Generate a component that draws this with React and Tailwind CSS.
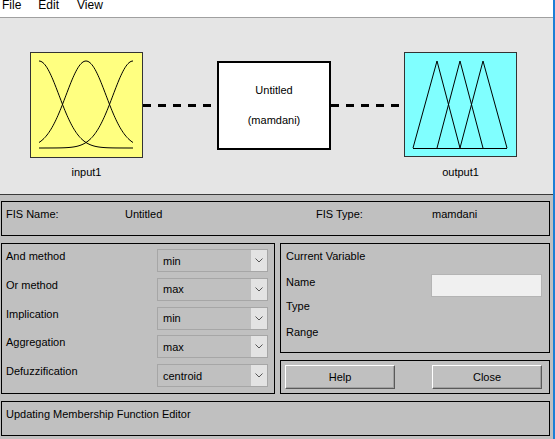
import React from 'react';

const font = { fontFamily: '"Liberation Sans", Arial, sans-serif' };

// gaussian membership curve as svg path, plot area x 8..102, y 8..95
const gaussPath = (c) => {
  const pts = [];
  for (let x = 8; x <= 102; x += 1) {
    const y = 95 - 87 * Math.exp(-((x - c) ** 2) / (2 * 20 * 20));
    pts.push(`${x},${y.toFixed(2)}`);
  }
  return 'M' + pts.join(' L');
};

const Dash = () => (
  <svg width="74" height="3" className="block">
    <line x1="0" y1="1.5" x2="74" y2="1.5" stroke="#000" strokeWidth="3" strokeDasharray="8 7" />
  </svg>
);

const Chevron = () => (
  <svg width="8" height="5" viewBox="0 0 8 5">
    <path d="M0.5 0.5 L4 4 L7.5 0.5" fill="none" stroke="#555" strokeWidth="1" />
  </svg>
);

const Select = ({ value }) => (
  <div className="w-[111px] h-[23px] border border-[#a6a6a6] flex items-stretch bg-[#c0c0c0]">
    <div className="flex-1 flex items-center pl-[5px] pt-[1px]">{value}</div>
    <div className="w-[16px] bg-[#e3e3e3] flex items-center justify-center">
      <Chevron />
    </div>
  </div>
);

const Button = ({ children }) => (
  <button className="w-[110px] h-[24px] bg-[#c0c0c0] border border-t-white border-l-white border-r-[#5a5a5a] border-b-[#5a5a5a] shadow-[inset_-1px_-1px_0_#a0a0a0] text-[11px] text-black">
    {children}
  </button>
);

const methods = [
  ['And method', 'min'],
  ['Or method', 'max'],
  ['Implication', 'min'],
  ['Aggregation', 'max'],
  ['Defuzzification', 'centroid'],
];

export default function App() {
  return (
    <div className="w-[555px] h-[439px] flex overflow-hidden text-[11px] leading-[13px] text-black" style={font}>
      <div className="w-[553px] flex flex-col">
        {/* Menu */}
        <div className="h-[19px] bg-white border-b border-[#a0a0a0] flex text-[12px] leading-[12px] -mt-[1px]">
          <span className="ml-[2px]">File</span>
          <span className="ml-[17px]">Edit</span>
          <span className="ml-[18px]">View</span>
        </div>

        {/* Diagram */}
        <div className="h-[177px] bg-[#e5e5e5] border-b border-[#3a3a3a] flex items-start pl-[30px] pt-[34px]">
          <div className="flex flex-col items-center">
            <div className="w-[113px] h-[106px] bg-[#ffff80] border border-[#333]">
              <svg width="111" height="104" className="block">
                <path d={gaussPath(8)} fill="none" stroke="#000" strokeWidth="1" />
                <path d={gaussPath(55)} fill="none" stroke="#000" strokeWidth="1" />
                <path d={gaussPath(102)} fill="none" stroke="#000" strokeWidth="1" />
              </svg>
            </div>
            <span className="mt-[8px]">input1</span>
          </div>
          <div className="mt-[52px]"><Dash /></div>
          <div className="mt-[9px] w-[114px] h-[89px] bg-white border-2 border-black flex flex-col items-center justify-center gap-[17px]">
            <span>Untitled</span>
            <span>(mamdani)</span>
          </div>
          <div className="mt-[52px]"><Dash /></div>
          <div className="flex flex-col items-center -ml-[1px]">
            <div className="w-[113px] h-[105px] bg-[#80ffff] border border-[#333]">
              <svg width="111" height="103" className="block">
                <g fill="none" stroke="#000" strokeWidth="1">
                  <path d="M8 95 L32 8 L55 95" />
                  <path d="M32 95 L55 8 L78 95" />
                  <path d="M55 95 L78 8 L102 95" />
                  <path d="M8 95.5 L102 95.5" />
                </g>
              </svg>
            </div>
            <span className="mt-[9px]">output1</span>
          </div>
        </div>

        {/* Lower controls */}
        <div className="flex-1 bg-[#c0c0c0] pl-[1px] pt-[6px] flex flex-col gap-[7px]">
          <div className="w-[549px] h-[35px] border border-black flex pt-[6px]">
            <span className="ml-[4px] w-[119px]">FIS Name:</span>
            <span className="w-[191px]">Untitled</span>
            <span className="w-[116px]">FIS Type:</span>
            <span>mamdani</span>
          </div>

          <div className="flex gap-[5px]">
            <div className="w-[274px] h-[151px] border border-black pt-[5px] pl-[4px] flex flex-col">
              {methods.map(([label, value]) => (
                <div key={label} className="h-[29px] flex items-start">
                  <span className="w-[151px] mt-[1px]">{label}</span>
                  <Select value={value} />
                </div>
              ))}
            </div>
            <div className="flex flex-col gap-[7px]">
              <div className="w-[270px] h-[110px] border border-black pl-[5px] pr-[7px] pt-[6px] flex flex-col">
                <span>Current Variable</span>
                <div className="h-[23px] flex justify-between items-start mt-[11px]">
                  <span className="mt-[2px]">Name</span>
                  <div className="w-[111px] h-[23px] bg-[#f0f0f0] border border-[#b4b4b4]" />
                </div>
                <span className="mt-[3px]">Type</span>
                <span className="mt-[13px]">Range</span>
              </div>
              <div className="w-[270px] h-[34px] border border-black flex items-center justify-between pl-[4px] pr-[7px]">
                <Button>Help</Button>
                <Button>Close</Button>
              </div>
            </div>
          </div>

          <div className="w-[549px] h-[35px] border border-black pt-[6px] pl-[4px]">
            Updating Membership Function Editor
          </div>
        </div>
      </div>
      <div className="w-[2px] bg-[#1c7fd6]" />
    </div>
  );
}
